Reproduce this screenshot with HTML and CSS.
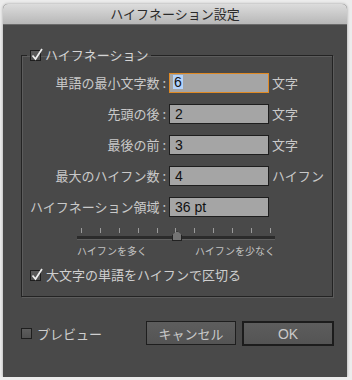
FILE: index.html
```html
<!DOCTYPE html>
<html lang="ja">
<head>
  <meta charset="UTF-8">
  <title>ハイフネーション設定</title>
  <link rel="stylesheet" href="styles.css">
</head>
<body>
  <div class="window">
    <div class="titlebar">ハイフネーション設定</div>
    <div class="content">
      <fieldset class="group">
        <legend>
          <span class="check on"><svg viewBox="0 0 14 14" width="14" height="14"><path d="M2.5 7.5 L5.5 11 L12 1" /></svg></span>
          ハイフネーション
        </legend>
        <div class="fields">
          <label>単語の最小文字数 :</label>
          <span class="input focus"><span class="sel">6</span></span>
          <span class="unit">文字</span>

          <label>先頭の後 :</label>
          <span class="input">2</span>
          <span class="unit">文字</span>

          <label>最後の前 :</label>
          <span class="input">3</span>
          <span class="unit">文字</span>

          <label>最大のハイフン数 :</label>
          <span class="input">4</span>
          <span class="unit">ハイフン</span>

          <label>ハイフネーション領域 :</label>
          <span class="input">36 pt</span>
          <span class="unit"></span>
        </div>
        <div class="slider">
          <div class="ticks">
            <i></i><i></i><i></i><i></i><i></i><i></i><i></i><i></i><i></i><i></i><i></i>
          </div>
          <div class="track"><span class="thumb"></span></div>
          <div class="slider-labels">
            <span>ハイフンを多く</span>
            <span>ハイフンを少なく</span>
          </div>
        </div>
        <div class="checkrow caps">
          <span class="check on"><svg viewBox="0 0 14 14" width="14" height="14"><path d="M2.5 7.5 L5.5 11 L12 1" /></svg></span>
          大文字の単語をハイフンで区切る
        </div>
      </fieldset>
      <div class="footer">
        <div class="checkrow">
          <span class="check"></span>
          プレビュー
        </div>
        <div class="buttons">
          <button class="btn">キャンセル</button>
          <button class="btn default">OK</button>
        </div>
      </div>
    </div>
  </div>
</body>
</html>
```

FILE: styles.css
```css
* {
  margin: 0;
  padding: 0;
  box-sizing: border-box;
}

body {
  background: #ececec;
  font-family: "Noto Sans CJK JP", "Noto Sans", sans-serif;
  padding: 4px 5px 0 3px;
}

.window {
  width: 344px;
  height: 373px;
  background: #494949;
  border-radius: 5px 5px 0 0;
  box-shadow: 0 0 3px rgba(0, 0, 0, 0.35);
  overflow: hidden;
}

.titlebar {
  height: 21px;
  background: linear-gradient(180deg, #dcdcdc 0%, #b7b7b7 100%);
  border-bottom: 1px solid #6a6a6a;
  color: #2a2a2a;
  font-size: 13px;
  line-height: 20px;
  text-align: center;
}

.content {
  padding-top: 23px;
}

.group {
  margin: 0 14px 0 18px;
  border: 1px solid #232323;
  box-shadow: 1px 1px 0 #5c5c5c, inset 1px 1px 0 #5c5c5c;
  padding: 0 0 14px;
}

.group legend {
  margin-left: 5px;
  padding: 0 3px;
  display: flex;
  align-items: center;
  gap: 4px;
  height: 14px;
  font-size: 13px;
  line-height: 14px;
  color: #d4d4d4;
}

.check {
  width: 11px;
  height: 11px;
  border: 1px solid #1e1e1e;
  background: linear-gradient(180deg, #5e5e5e 0%, #505050 100%);
  position: relative;
  flex: none;
}

.check svg {
  position: absolute;
  left: -1px;
  top: -3px;
  fill: none;
  stroke: #eeeeee;
  stroke-width: 1.7;
}

.fields {
  display: grid;
  grid-template-columns: 144px 100px auto;
  column-gap: 3px;
  row-gap: 11px;
  margin-top: 11px;
  font-size: 13px;
  color: #c9c9c9;
}

.fields label {
  text-align: right;
  line-height: 20px;
}

.unit {
  line-height: 20px;
}

.input {
  height: 20px;
  background: #a5a5a5;
  border: 1px solid #1e1e1e;
  color: #111111;
  font-family: "Liberation Sans", sans-serif;
  font-size: 14px;
  line-height: 18px;
  padding-left: 5px;
}

.input.focus {
  border-color: #e08a24;
  padding-left: 3px;
}

.sel {
  display: inline-block;
  background: #b4d3fb;
  line-height: 14px;
  padding: 0 1px 0 1px;
  vertical-align: 1px;
}

.slider {
  width: 198px;
  margin: 11px 0 0 55px;
}

.ticks {
  display: flex;
  justify-content: space-between;
  padding: 0 4px;
  height: 5px;
}

.ticks i {
  width: 1px;
  height: 5px;
  background: #9a9a9a;
}

.track {
  position: relative;
  height: 4px;
  margin-top: 3px;
  background: #2b2b2b;
  border-bottom: 1px solid #5e5e5e;
}

.thumb {
  position: absolute;
  left: 95px;
  top: -5px;
  width: 10px;
  height: 10px;
  background: #747474;
  border: 1px solid #222222;
  clip-path: polygon(50% 0, 100% 40%, 100% 100%, 0 100%, 0 40%);
}

.slider-labels {
  display: flex;
  justify-content: space-between;
  margin-top: 5px;
  font-size: 10px;
  line-height: 12px;
  color: #c2c2c2;
}

.checkrow {
  display: flex;
  align-items: center;
  gap: 5px;
  font-size: 13px;
  line-height: 14px;
  color: #cfcfcf;
}

.caps {
  margin: 11px 0 0 8px;
}

.footer {
  display: flex;
  justify-content: space-between;
  align-items: center;
  padding: 24px 13px 0 18px;
}

.buttons {
  display: flex;
  gap: 6px;
}

.btn {
  width: 90px;
  height: 24px;
  background: linear-gradient(180deg, #5d5d5d 0%, #545454 100%);
  border: 1px solid #1e1e1e;
  color: #c9c9c9;
  font-family: "Noto Sans CJK JP", "Liberation Sans", sans-serif;
  font-size: 13px;
}

.btn.default {
  width: 92px;
  height: 25px;
  border: 2px solid #1c1c1c;
  font-family: "Liberation Sans", sans-serif;
  font-size: 14px;
}
```
